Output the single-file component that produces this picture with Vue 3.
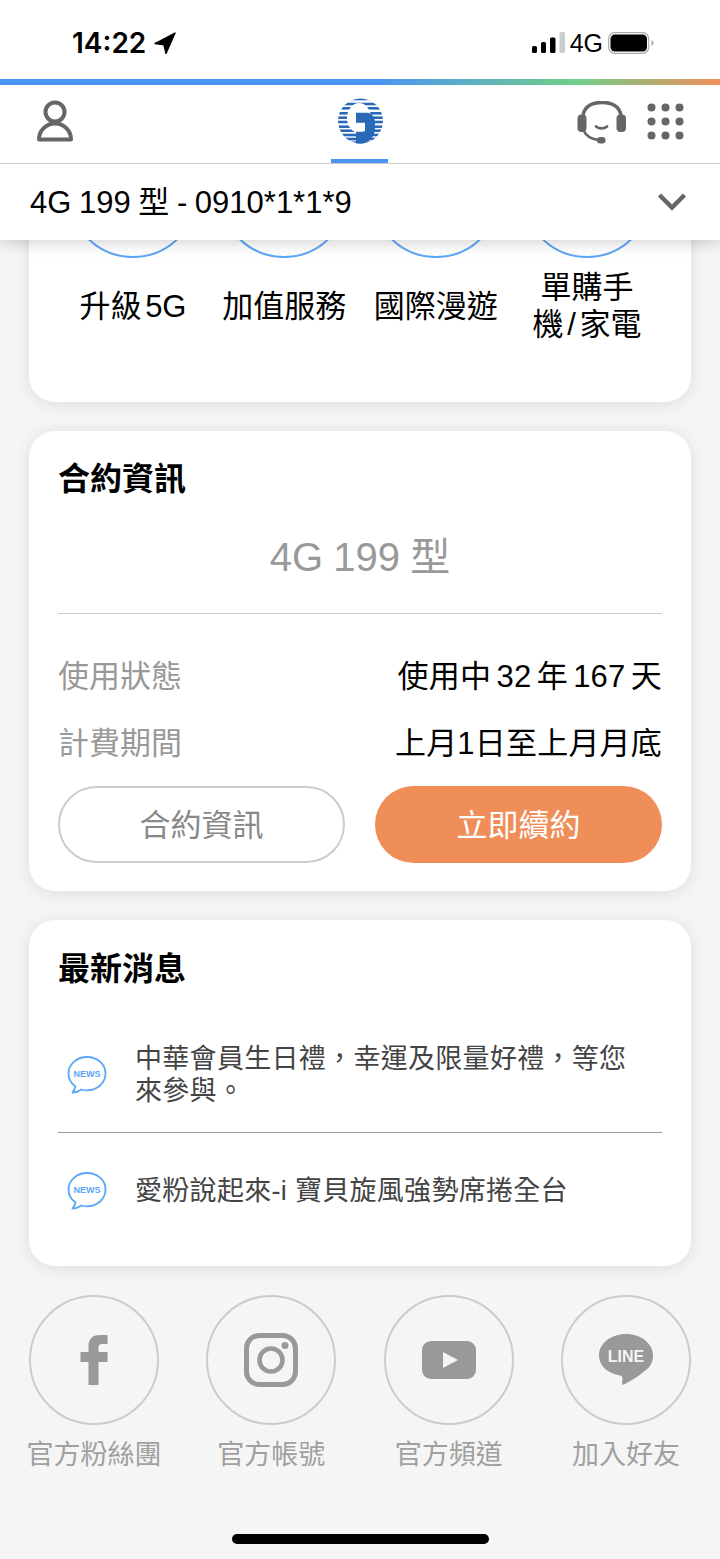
<script setup>
const shortcuts = [
  { id: 1, lines: ['升級 5G'] },
  { id: 2, lines: ['加值服務'] },
  { id: 3, lines: ['國際漫遊'] },
  { id: 4, lines: ['單購手', '機 / 家電'] }
]

const contract = [
  { label: '使用狀態', value: '使用中 32 年 167 天' },
  { label: '計費期間', value: '上月1日至上月月底' }
]

const news = [
  { id: 1, text: '中華會員生日禮，幸運及限量好禮，等您來參與。' },
  { id: 2, text: '愛粉說起來-i 寶貝旋風強勢席捲全台' }
]

const stripes = [0.7, 5.7, 10, 15, 19.4, 23.7, 28.4, 32.4, 36.7, 40.7, 44.4]
</script>

<template>
  <div class="phone">
    <header class="top">
      <div class="status">
        <div class="status-left">
          <span class="time">14:22</span>
          <svg class="arrow" width="22" height="22" viewBox="0 0 22 22">
            <path d="M1 11.500 21 1 12 21.500 10 12.800Z" fill="#000" stroke="#000" stroke-width="1.400" stroke-linejoin="round" />
          </svg>
        </div>
        <div class="status-right">
          <svg width="33" height="22" viewBox="0 0 33 22">
            <rect x="0" y="14" width="5" height="7" rx="1.500" fill="#000" />
            <rect x="9" y="10" width="5" height="11" rx="1.500" fill="#000" />
            <rect x="18" y="5.500" width="5.500" height="15.500" rx="1.500" fill="#000" />
            <rect x="27.500" y="0" width="5.500" height="21" rx="1.500" fill="#ccc" />
          </svg>
          <span class="net">4G</span>
          <svg width="46" height="22" viewBox="0 0 46 22">
            <rect x="0.700" y="0.700" width="40" height="20.600" rx="6" fill="none" stroke="#aaa" stroke-width="1.200" />
            <rect x="2.500" y="2.500" width="36.500" height="17" rx="4.500" fill="#000" />
            <path d="M43.500 8v6c1.300-.5 2-1.700 2-3s-.7-2.500-2-3z" fill="#aaa" />
          </svg>
        </div>
      </div>
      <div class="rainbow"></div>
      <nav class="nav">
        <svg class="user" width="38" height="42" viewBox="0 0 38 42">
          <circle cx="18" cy="12" r="9.500" fill="none" stroke="#666" stroke-width="4" />
          <path d="M2 39.500a16 16 0 0 1 32 0z" fill="none" stroke="#666" stroke-width="4" stroke-linejoin="round" />
        </svg>
        <div class="logo-tab">
          <svg width="48" height="48" viewBox="0 0 48 48">
            <defs>
              <clipPath id="globe"><circle cx="24.500" cy="24" r="22.500" /></clipPath>
            </defs>
            <g clip-path="url(#globe)" fill="#2a68b8">
              <rect v-for="y in stripes" :key="y" x="0" :y="y" width="48" height="2.600" />
            </g>
            <ellipse cx="23" cy="21" rx="12" ry="15" fill="#fff" />
            <path d="M20 15.700H32C36 16.700 39 20 39 26V33C38 40 33 45 27 46.500H20V34.700H29V25.700H20Z" fill="#2a68b8" />
          </svg>
          <div class="tab-line"></div>
        </div>
        <div class="nav-right">
          <svg width="50" height="44" viewBox="0 0 50 44">
            <path d="M6 14C8 5 16 1.500 25 1.500S42 5 44 14" fill="none" stroke="#666" stroke-width="3.500" />
            <rect x="0.500" y="13.500" width="9" height="17.500" rx="4" fill="#666" />
            <rect x="39.500" y="13.500" width="9.500" height="17.500" rx="4" fill="#666" />
            <path d="M19 25.500c3 2.500 8 2.500 11 0" fill="none" stroke="#666" stroke-width="2.800" stroke-linecap="round" />
            <path d="M7 30c2 5 8 8 14 9" fill="none" stroke="#666" stroke-width="2.500" />
            <rect x="20" y="36" width="8.500" height="6.500" rx="3" fill="#666" />
          </svg>
          <svg width="38" height="38" viewBox="0 0 38 38">
            <g fill="#666">
              <circle cx="4.500" cy="4.500" r="4" /><circle cx="18.500" cy="4.500" r="4" /><circle cx="32.500" cy="4.500" r="4" />
              <circle cx="4.500" cy="18.500" r="4" /><circle cx="18.500" cy="18.500" r="4" /><circle cx="32.500" cy="18.500" r="4" />
              <circle cx="4.500" cy="32.500" r="4" /><circle cx="18.500" cy="32.500" r="4" /><circle cx="32.500" cy="32.500" r="4" />
            </g>
          </svg>
        </div>
      </nav>
      <div class="selector">
        <span>4G 199 型 - 0910*1*1*9</span>
        <svg width="30" height="20" viewBox="0 0 30 20">
          <path d="M2.500 3 15 15.500 27.500 3" fill="none" stroke="#666" stroke-width="4.500" />
        </svg>
      </div>
    </header>

    <main class="content">
      <section class="card shortcuts">
        <div v-for="s in shortcuts" :key="s.id" class="shortcut">
          <div class="ring"></div>
          <div class="shortcut-label">
            <div v-for="l in s.lines" :key="l">{{ l }}</div>
          </div>
        </div>
      </section>

      <section class="card contract">
        <h2 class="card-title">合約資訊</h2>
        <div class="plan">4G 199 型</div>
        <div class="contract-rows">
          <div v-for="r in contract" :key="r.label" class="row">
            <span class="row-label">{{ r.label }}</span>
            <span class="row-value">{{ r.value }}</span>
          </div>
        </div>
        <div class="buttons">
          <button class="btn btn-line">合約資訊</button>
          <button class="btn btn-fill">立即續約</button>
        </div>
      </section>

      <section class="card news">
        <h2 class="card-title">最新消息</h2>
        <div v-for="n in news" :key="n.id" class="news-item">
          <svg class="news-icon" width="40" height="40" viewBox="0 0 40 40">
            <path d="M20 2C9.800 2 1.500 9.300 1.500 18.500c0 5.500 2.700 10 7 13-.5 2-1.500 4-3 6 3 0 6.500-1.300 9-3 2 .6 3.800.9 5.500.9 10.200 0 18.500-7.400 18.500-16.900S30.200 2 20 2Z" fill="none" stroke="#5ba6f6" stroke-width="1.800" stroke-linejoin="round" />
            <text x="20" y="22" text-anchor="middle" class="news-word">NEWS</text>
          </svg>
          <div class="news-text">{{ n.text }}</div>
        </div>
      </section>

      <section class="socials">
        <div class="social">
          <div class="social-ring">
            <svg width="28" height="50" viewBox="-0.500 0 28 50">
              <path d="M8 50V27H0V17H8V11C8 3 13 0 20 0H27V9H22C19 9 18 10 18 13V17H27V27H18V50Z" fill="#999" />
            </svg>
          </div>
          <div class="social-label">官方粉絲團</div>
        </div>
        <div class="social">
          <div class="social-ring">
            <svg width="54" height="54" viewBox="0 0 54 54">
              <rect x="2.500" y="2.500" width="49" height="49" rx="13" fill="none" stroke="#999" stroke-width="5" />
              <circle cx="27" cy="27" r="11.500" fill="none" stroke="#999" stroke-width="4.500" />
              <circle cx="41" cy="12.500" r="3.500" fill="#999" />
            </svg>
          </div>
          <div class="social-label">官方帳號</div>
        </div>
        <div class="social">
          <div class="social-ring">
            <svg width="54" height="38" viewBox="0 0 54 38">
              <rect width="54" height="38" rx="9" fill="#999" />
              <path d="M21 11V27L36 19Z" fill="#f5f5f5" />
            </svg>
          </div>
          <div class="social-label">官方頻道</div>
        </div>
        <div class="social">
          <div class="social-ring">
            <svg width="54" height="52" viewBox="0 0 54 52">
              <path d="M27 0C12 0 0 9.500 0 21.500c0 10.500 9 18 21 20 1.500.5 2.500 1 2.500 3l-.5 5.500c.2 1 1.500 1 3 0 6-3.500 13-7 19-12.500C52 33 54 27.500 54 21.500 54 9.500 42 0 27 0Z" fill="#999" />
              <text x="27" y="28" text-anchor="middle" class="line-word">LINE</text>
            </svg>
          </div>
          <div class="social-label">加入好友</div>
        </div>
      </section>

      <div class="home-bar"></div>
    </main>
  </div>
</template>

<style>
html, body {
  margin: 0;
  background: #f5f5f5;
}
</style>

<style scoped>
.phone {
  width: 720px;
  height: 1559px;
  display: flex;
  flex-direction: column;
  overflow: hidden;
  background: #f5f5f5;
  font-family: "Liberation Sans", "Noto Sans CJK TC", sans-serif;
  color: #000;
}

.top {
  background: #fff;
  box-shadow: 0 3px 14px rgba(0, 0, 0, 0.18);
  position: relative;
  z-index: 2;
  flex: none;
}

.status {
  height: 79px;
  display: flex;
  justify-content: space-between;
  align-items: center;
  padding: 7px 66px 0 72px;
  box-sizing: border-box;
}

.status-left {
  display: flex;
  align-items: center;
  gap: 8px;
}

.time {
  font-family: Inter, sans-serif;
  font-weight: 600;
  font-size: 28px;
}

.status-right {
  display: flex;
  align-items: center;
  gap: 5px;
}

.net {
  font-size: 25px;
}

.rainbow {
  height: 6px;
  background: linear-gradient(90deg, #4a94f5 0%, #4a94f5 52%, #6fcf88 80%, #f08e5a 100%);
}

.nav {
  height: 79px;
  border-bottom: 1px solid #ccc;
  box-sizing: border-box;
  display: flex;
  justify-content: space-between;
  align-items: flex-start;
  padding: 0 35px 0 37px;
  position: relative;
}

.user {
  margin-top: 15px;
}

.logo-tab {
  position: absolute;
  left: 331px;
  top: 0;
  width: 57px;
  height: 78px;
  display: flex;
  flex-direction: column;
  align-items: center;
  justify-content: space-between;
}

.logo-tab svg {
  margin-top: 12px;
}

.tab-line {
  width: 57px;
  height: 4px;
  background: #4a94f5;
}

.nav-right {
  display: flex;
  align-items: flex-start;
  gap: 20px;
  padding-top: 16px;
}

.nav-right svg:last-child {
  margin-top: 2px;
}

.selector {
  height: 76px;
  box-sizing: border-box;
  display: flex;
  justify-content: space-between;
  align-items: center;
  padding: 0 33px 5px 30px;
  font-size: 31px;
  word-spacing: -1px;
}

.selector svg {
  margin-top: 5px;
}

.content {
  flex: 1;
  min-height: 0;
  overflow: hidden;
  display: flex;
  flex-direction: column;
  align-items: center;
  gap: 29px;
}

.card {
  width: 662px;
  background: #fff;
  border-radius: 26px;
  box-shadow: 0 2px 16px rgba(0, 0, 0, 0.1);
  box-sizing: border-box;
  flex: none;
}

.shortcuts {
  margin-top: -150px;
  height: 312px;
  padding: 38px 39px 0;
  display: flex;
  justify-content: space-between;
}

.shortcut {
  width: 130px;
  display: flex;
  flex-direction: column;
  align-items: center;
}

.ring {
  width: 130px;
  height: 130px;
  border: 2px solid #5ba6f6;
  border-radius: 50%;
  box-sizing: border-box;
  flex: none;
}

.shortcut-label {
  height: 96px;
  display: flex;
  flex-direction: column;
  justify-content: center;
  text-align: center;
  font-size: 31px;
  line-height: 37px;
  white-space: nowrap;
  word-spacing: -5px;
}

.contract {
  height: 460px;
  padding: 29px 29px 28px;
  display: flex;
  flex-direction: column;
}

.card-title {
  margin: 0;
  font-size: 32px;
  line-height: 38px;
  font-weight: 700;
}

.plan {
  margin-top: 26px;
  height: 90px;
  color: #999;
  font-size: 40px;
  line-height: 66px;
  word-spacing: -1px;
  text-align: center;
  border-bottom: 1px solid #ccc;
  box-sizing: border-box;
  flex: none;
}

.contract-rows {
  padding-top: 39px;
  display: flex;
  flex-direction: column;
  gap: 27px;
}

.row {
  height: 40px;
  display: flex;
  justify-content: space-between;
  align-items: center;
  font-size: 31px;
}

.row-label {
  color: #999;
}

.row-value {
  letter-spacing: 0.200px;
  word-spacing: -3.500px;
}

.buttons {
  margin-top: auto;
  display: flex;
  gap: 30px;
}

.btn {
  flex: none;
  width: 287px;
  height: 77px;
  border-radius: 39px;
  font-family: inherit;
  font-size: 31px;
  padding: 0 0 5px;
  box-sizing: border-box;
}

.btn-line {
  background: #fff;
  color: #888;
  border: 2px solid #ccc;
}

.btn-fill {
  background: #f08e5a;
  color: #fff;
  border: none;
}

.news {
  height: 346px;
  padding: 29px 29px 0;
}

.news .card-title {
  padding-top: 1px;
}

.news-item {
  display: flex;
  align-items: center;
  padding: 0 0 0 9px;
  height: 115px;
  gap: 28px;
  border-bottom: 1px solid #999;
  box-sizing: border-box;
}

.news-item:first-of-type {
  margin-top: 30px;
}

.news-item:last-child {
  border-bottom: none;
}

.news-text {
  font-size: 27px;
  letter-spacing: 0.300px;
  line-height: 32px;
  color: #444;
  flex: 1;
  max-width: 505px;
}

.news-word {
  font-family: "Liberation Sans", sans-serif;
  font-weight: 700;
  font-size: 9px;
  fill: #5ba6f6;
}

.socials {
  width: 662px;
  display: flex;
  justify-content: space-between;
  flex: none;
}

.social {
  width: 130px;
  display: flex;
  flex-direction: column;
  align-items: center;
}

.social-ring {
  width: 130px;
  height: 130px;
  border: 2px solid #ccc;
  border-radius: 50%;
  box-sizing: border-box;
  display: flex;
  justify-content: center;
  align-items: center;
}

.social-label {
  margin-top: 12px;
  font-size: 27px;
  line-height: 36px;
  color: #a0a0a0;
  white-space: nowrap;
}

.line-word {
  font-family: "Liberation Sans", sans-serif;
  font-weight: 700;
  font-size: 16px;
  fill: #f5f5f5;
}

.home-bar {
  position: absolute;
  left: 232px;
  top: 1534px;
  width: 257px;
  height: 10px;
  border-radius: 5px;
  background: #000;
}
</style>
